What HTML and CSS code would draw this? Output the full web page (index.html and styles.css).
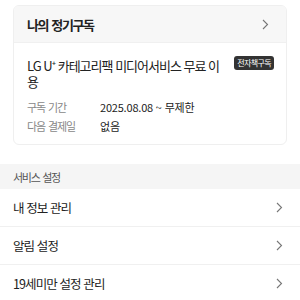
FILE: index.html
```html
<!DOCTYPE html>
<html lang="ko">
<head>
    <meta charset="UTF-8">
    <meta name="viewport" content="width=device-width, initial-scale=1.0">
    <title>마이페이지</title>
    <link rel="stylesheet" href="styles.css">
</head>
<body>
    <div class="wrap">
        <div class="card">
            <div class="card-head">
                <span>나의 정기구독</span>
                <svg class="chev" width="7" height="11" viewBox="0 0 7 11"><path d="M1 1l4.5 4.5L1 10" fill="none" stroke="#777" stroke-width="1.1"/></svg>
            </div>
            <div class="card-body">
                <div class="title-row">
                    <p class="title">LG U⁺ 카테고리팩 미디어서비스 무료 이용</p>
                    <span class="badge">전자책구독</span>
                </div>
                <dl class="info">
                    <dt>구독 기간</dt>
                    <dd>2025.08.08 ~ 무제한</dd>
                    <dt>다음 결제일</dt>
                    <dd>없음</dd>
                </dl>
            </div>
        </div>
    </div>

    <div class="section-label">서비스 설정</div>
    <ul class="menu">
        <li><span>내 정보 관리</span><svg width="7" height="11" viewBox="0 0 7 11"><path d="M1 1l4.5 4.5L1 10" fill="none" stroke="#777" stroke-width="1.1"/></svg></li>
        <li><span>알림 설정</span><svg width="7" height="11" viewBox="0 0 7 11"><path d="M1 1l4.5 4.5L1 10" fill="none" stroke="#777" stroke-width="1.1"/></svg></li>
        <li><span>19세미만 설정 관리</span><svg width="7" height="11" viewBox="0 0 7 11"><path d="M1 1l4.5 4.5L1 10" fill="none" stroke="#777" stroke-width="1.1"/></svg></li>
    </ul>
</body>
</html>
```

FILE: styles.css
```css
* {
    box-sizing: border-box;
}

body {
    margin: 0;
    background: #fff;
    color: #222;
    font-family: "Noto Sans CJK KR", "Noto Sans", sans-serif;
}

.wrap {
    padding: 5px 13px 19px;
}

.card {
    border: 1px solid #efefef;
    border-radius: 6px;
    overflow: hidden;
}

.card-head {
    height: 37px;
    background: #f7f7f7;
    padding: 0 17px 0 13px;
    display: flex;
    align-items: center;
    justify-content: space-between;
    font-size: 13px;
    font-weight: 700;
    letter-spacing: -1.4px;
    word-spacing: 1px;
    border-bottom: 1px solid #f0f0f0;
}

.card-body {
    padding: 15px 12px 10px 13px;
}

.title-row {
    display: flex;
    align-items: flex-start;
    gap: 11px;
}

.title {
    margin: 0;
    flex: 1;
    font-size: 13px;
    line-height: 16px;
    letter-spacing: -1px;
    color: #222;
}

.badge {
    margin-top: -2px;
    background: #333;
    color: #fff;
    font-size: 8px;
    line-height: 14px;
    letter-spacing: -0.6px;
    padding: 0 3px;
    border-radius: 3px;
    white-space: nowrap;
}

.info {
    margin: 9px 0 0;
    display: grid;
    grid-template-columns: 73px 1fr;
    row-gap: 3px;
    font-size: 11px;
    line-height: 16px;
}

.info dt {
    color: #888;
    letter-spacing: -1.1px;
    word-spacing: 1px;
}

.info dd {
    margin: 0;
    color: #222;
    letter-spacing: -0.2px;
}

.section-label {
    background: #f5f5f5;
    height: 25px;
    padding: 0 13px;
    display: flex;
    align-items: center;
    font-size: 11px;
    letter-spacing: -1.3px;
    word-spacing: 1px;
    color: #555;
}

.menu {
    list-style: none;
    margin: 0;
    padding: 0;
}

.menu li {
    height: 38px;
    padding: 0 17px 0 13px;
    display: flex;
    align-items: center;
    justify-content: space-between;
    font-size: 12.5px;
    letter-spacing: -0.9px;
    border-bottom: 1px solid #f0f0f0;
}
```
